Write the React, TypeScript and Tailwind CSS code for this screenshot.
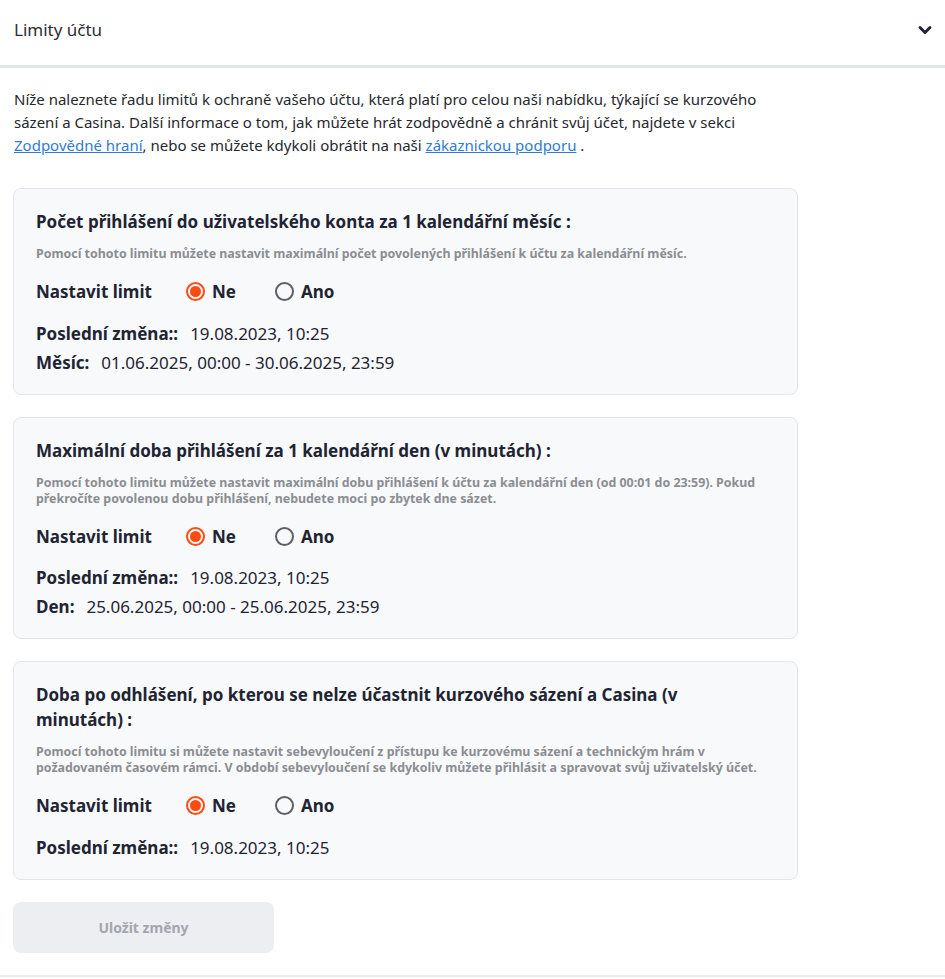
import { ChevronDown } from "lucide-react";

const font = { fontFamily: '"Noto Sans", "Open Sans", sans-serif' };

type Limit = {
    title: string;
    desc: string;
    rows: { label: string; value: string }[];
};

const limits: Limit[] = [
    {
        title: "Počet přihlášení do uživatelského konta za 1 kalendářní měsíc :",
        desc: "Pomocí tohoto limitu můžete nastavit maximální počet povolených přihlášení k účtu za kalendářní měsíc.",
        rows: [
            { label: "Poslední změna::", value: "19.08.2023, 10:25" },
            { label: "Měsíc:", value: "01.06.2025, 00:00 - 30.06.2025, 23:59" },
        ],
    },
    {
        title: "Maximální doba přihlášení za 1 kalendářní den (v minutách) :",
        desc: "Pomocí tohoto limitu můžete nastavit maximální dobu přihlášení k účtu za kalendářní den (od 00:01 do 23:59). Pokud překročíte povolenou dobu přihlášení, nebudete moci po zbytek dne sázet.",
        rows: [
            { label: "Poslední změna::", value: "19.08.2023, 10:25" },
            { label: "Den:", value: "25.06.2025, 00:00 - 25.06.2025, 23:59" },
        ],
    },
    {
        title: "Doba po odhlášení, po kterou se nelze účastnit kurzového sázení a Casina (v minutách) :",
        desc: "Pomocí tohoto limitu si můžete nastavit sebevyloučení z přístupu ke kurzovému sázení a technickým hrám v požadovaném časovém rámci. V období sebevyloučení se kdykoliv můžete přihlásit a spravovat svůj uživatelský účet.",
        rows: [{ label: "Poslední změna::", value: "19.08.2023, 10:25" }],
    },
];

function Radio({ checked, label }: { checked: boolean; label: string }) {
    return (
        <div className="flex items-center gap-[7px]">
            {checked ? (
                <span className="flex h-[19px] w-[19px] items-center justify-center rounded-full border-2 border-[#ff4a12]">
                    <span className="h-[11px] w-[11px] rounded-full bg-[#ff4a12]" />
                </span>
            ) : (
                <span className="h-[19px] w-[19px] rounded-full border-2 border-[#5c5f66]" />
            )}
            <span className="text-[17px] font-bold text-[#1f2433]">{label}</span>
        </div>
    );
}

function LimitCard({ limit }: { limit: Limit }) {
    return (
        <div className="w-[785px] rounded-lg border border-[#e3e5e9] bg-[#f8f9fb] px-[22px] pt-[20px] pb-[20px]">
            <h3 className="pr-10 text-[17px] font-bold leading-[25px] text-[#1f2433]">{limit.title}</h3>
            <p className="mt-[12px] pr-[10px] text-[12.4px] font-bold leading-[16px] text-[#8b8d92]">{limit.desc}</p>
            <div className="mt-[17px] flex items-center">
                <span className="w-[150px] text-[17px] font-bold text-[#1f2433]">Nastavit limit</span>
                <div className="w-[89px]">
                    <Radio checked label="Ne" />
                </div>
                <Radio checked={false} label="Ano" />
            </div>
            <div className="mt-[17px] flex flex-col gap-[6px]">
                {limit.rows.map((r) => (
                    <div key={r.label} className="text-[17px] leading-[23px] text-[#1f2433]">
                        <span className="font-bold">{r.label}</span>
                        <span className="ml-[12px]">{r.value}</span>
                    </div>
                ))}
            </div>
        </div>
    );
}

export default function App() {
    return (
        <div className="min-h-[979px] w-[945px] bg-white" style={font}>
            <div className="flex h-[68px] items-center justify-between border-b-[3px] border-[#e4e5e8] pb-[5px] pl-[14px] pr-[10px]">
                <span className="text-[17px] text-[#2b2d33]">Limity účtu</span>
                <ChevronDown className="h-[20px] w-[20px] text-[#1f2433]" strokeWidth={3.5} />
            </div>
            <p className="mt-[20px] w-[775px] pl-[14px] text-[15px] leading-[23px] text-[#26282d]">
                Níže naleznete řadu limitů k ochraně vašeho účtu, která platí pro celou naši nabídku, týkající se kurzového sázení a
                Casina. Další informace o tom, jak můžete hrát zodpovědně a chránit svůj účet, najdete v sekci{" "}
                <a href="#" className="text-[#2f7bd6] underline">
                    Zodpovědné hraní
                </a>
                , nebo se můžete kdykoli obrátit na naši{" "}
                <a href="#" className="text-[#2f7bd6] underline">
                    zákaznickou podporu
                </a>{" "}
                .
            </p>
            <div className="mt-[31px] flex flex-col gap-[22px] pl-[13px]">
                {limits.map((l) => (
                    <LimitCard key={l.title} limit={l} />
                ))}
                <button className="h-[51px] w-[261px] rounded-lg bg-[#eceef1] text-[14px] font-bold text-[#a3a6ad]">
                    Uložit změny
                </button>
            </div>
            <div className="mt-[22px] border-b-[2px] border-[#eceef1]" />
        </div>
    );
}
